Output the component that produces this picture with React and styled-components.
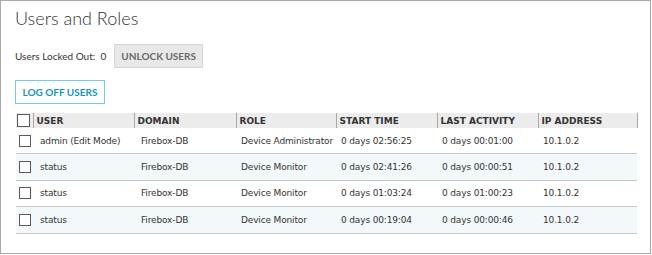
import React from "react";
import styled, { createGlobalStyle } from "styled-components";

const GlobalStyle = createGlobalStyle`
  html, body {
    margin: 0;
    padding: 0;
    background: #fff;
  }
`;

const Panel = styled.div`
  box-sizing: border-box;
  width: 651px;
  height: 254px;
  border: 1px solid #a9a9a9;
  padding: 5px 0 0 14px;
  font-family: Lato, "Open Sans", sans-serif;
  color: #333;
`;

const Title = styled.h1`
  margin: 0;
  font-size: 18px;
  font-weight: 300;
  line-height: 24px;
  color: #333;
`;

const LockRow = styled.div`
  display: flex;
  align-items: center;
  gap: 8px;
  margin-top: 14px;
  font-size: 10px;
`;

const Button = styled.button`
  box-sizing: border-box;
  width: ${(p) => (p.$primary ? 90 : 89)}px;
  height: 24px;
  padding: 0;
  font-family: Lato, "Open Sans", sans-serif;
  font-size: 10px;
  font-weight: 700;
  text-align: center;
  border: 1px solid ${(p) => (p.$primary ? "#6fcde3" : "#d6d6d6")};
  background: ${(p) => (p.$primary ? "#fff" : "#e8e8e8")};
  color: ${(p) => (p.$primary ? "#1b94bf" : "#6a6a6a")};
  cursor: pointer;
`;

const LogOffRow = styled.div`
  margin-top: 12px;
`;

const Table = styled.table`
  margin-top: 9px;
  margin-left: 1px;
  width: 621px;
  table-layout: fixed;
  border-collapse: collapse;
  font-family: "DejaVu Sans", Verdana, sans-serif;
  font-size: 9px;
  color: #333;
`;

const HeadCell = styled.th`
  height: 15px;
  padding: 0 3px;
  text-align: left;
  font-weight: 700;
  background: #ececec;
  border-right: 1px solid #a8a8a8;
  border-left: 1px solid #f8f8f8;
  white-space: nowrap;
  overflow: hidden;
`;

const CheckHead = styled.th`
  width: 17px;
  padding: 0 0 0 1px;
  background: #ececec;
  border-right: 1px solid #a8a8a8;
  text-align: left;
  vertical-align: middle;
`;

const Row = styled.tr`
  background: ${(p) => (p.$alt ? "#f3f9fb" : "#fff")};
  border-bottom: 1px solid #c9c9c9;
`;

const Cell = styled.td`
  height: 25.4px;
  padding: 0 0 0 ${(p) => (p.$first ? 7 : 5)}px;
  white-space: nowrap;
  letter-spacing: -0.15px;
`;

const CheckCell = styled.td`
  padding: 0 0 0 3px;
`;

const Box = styled.span`
  display: block;
  box-sizing: border-box;
  width: ${(p) => p.$size}px;
  height: ${(p) => p.$size}px;
  border: 1px solid #5a5a5a;
  background: #fff;
`;

const columns = [
  ["USER", 101],
  ["DOMAIN", 102],
  ["ROLE", 100],
  ["START TIME", 101],
  ["LAST ACTIVITY", 101],
  ["IP ADDRESS", 99],
];

const sessions = [
  ["admin (Edit Mode)", "Firebox-DB", "Device Administrator", "0 days 02:56:25", "0 days 00:01:00", "10.1.0.2"],
  ["status", "Firebox-DB", "Device Monitor", "0 days 02:41:26", "0 days 00:00:51", "10.1.0.2"],
  ["status", "Firebox-DB", "Device Monitor", "0 days 01:03:24", "0 days 01:00:23", "10.1.0.2"],
  ["status", "Firebox-DB", "Device Monitor", "0 days 00:19:04", "0 days 00:00:46", "10.1.0.2"],
];

const App = () => (
  <>
    <GlobalStyle />
    <Panel>
      <Title>Users and Roles</Title>
      <LockRow>
        <span>Users Locked Out:&nbsp; 0</span>
        <Button>UNLOCK USERS</Button>
      </LockRow>
      <LogOffRow>
        <Button $primary>LOG OFF USERS</Button>
      </LogOffRow>
      <Table>
        <colgroup>
          <col style={{ width: 17 }} />
          {columns.map(([name, w]) => (
            <col key={name} style={{ width: w }} />
          ))}
        </colgroup>
        <thead>
          <tr>
            <CheckHead>
              <Box $size={13} />
            </CheckHead>
            {columns.map(([name]) => (
              <HeadCell key={name}>{name}</HeadCell>
            ))}
          </tr>
        </thead>
        <tbody>
          {sessions.map((row, i) => (
            <Row key={i} $alt={i % 2 === 1}>
              <CheckCell>
                <Box $size={12} />
              </CheckCell>
              {row.map((v, j) => (
                <Cell key={j} $first={j === 0 || j === 1}>
                  {v}
                </Cell>
              ))}
            </Row>
          ))}
        </tbody>
      </Table>
    </Panel>
  </>
);

export default App;
